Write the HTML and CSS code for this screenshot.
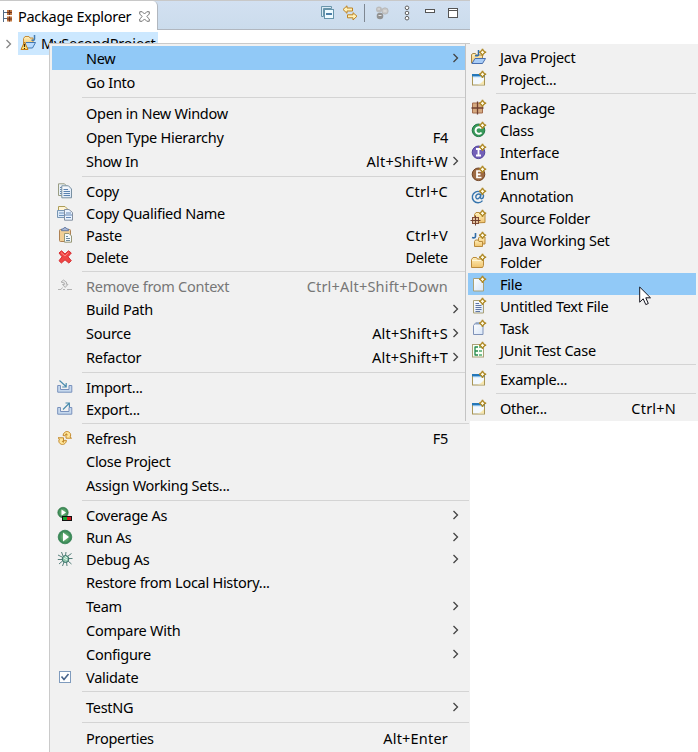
FILE: index.html
```
<!DOCTYPE html>
<html lang="en">
<head>
<meta charset="utf-8">
<title>Package Explorer</title>
<link rel="stylesheet" href="styles.css">
</head>
<body>
<svg class="defs" width="0" height="0" aria-hidden="true">
  <defs>
    <linearGradient id="gold" x1="0" y1="0" x2="0" y2="1"><stop offset="0" stop-color="#fff0bd"/><stop offset="1" stop-color="#f0c36c"/></linearGradient>
    <linearGradient id="sheet" x1="0" y1="0" x2="1" y2="1"><stop offset="0" stop-color="#fff"/><stop offset="1" stop-color="#d8e5f6"/></linearGradient>
    <radialGradient id="green"><stop offset="0" stop-color="#8bcb86"/><stop offset="1" stop-color="#2d8050"/></radialGradient>
  </defs>
  <symbol id="spark" viewBox="0 0 16 16"><path d="M11.5 .8 14 3.3 11.5 5.8 9 3.3Z" fill="#fff4c4" stroke="#b08a28" stroke-width="1.5"/><path d="M11.5 -.2V1M11.5 5.6V7M8 3.3H9M14 3.3H15.2" stroke="#b08a28" stroke-width="1.6"/><path d="M11.5 1.8V4.8M10 3.3H13" stroke="#fffbe6"/></symbol>
  <symbol id="folder" viewBox="0 0 16 16"><path d="M.5 13.5V5.5L2 3.5H5.5L6.5 5H12.5V11.5L11.5 13.5Z" fill="url(#gold)" stroke="#b98a3b"/><path d="M1 6.5H12" stroke="#fff6d8"/></symbol>
  <symbol id="window" viewBox="0 0 16 16"><rect x="1.5" y="3.5" width="12" height="10.5" fill="#f3f9ff" stroke="#a89555"/><path d="M13 9C11 11 10 13 6 13.5H13Z" fill="#f8e7ad"/><path d="M1 4.2H14" stroke="#2577b9" stroke-width="2.4"/><path d="M2 5.7H13" stroke="#81bce9"/></symbol>
  <symbol id="doc" viewBox="0 0 16 16"><path d="M2.5 2.5H9.5L12.5 5.5V15H2.5Z" fill="url(#sheet)" stroke="#aaa177"/></symbol>
  <symbol id="refresh" viewBox="0 0 16 16"><path d="M6.5 4C7.5 1.5 10.5 .8 12.3 2.3 14.2 3.8 13.8 6 13 7L14.5 8.2H9V3.8L10.3 5C10.5 4 8.5 3.5 7.8 5.8L6 5.5Z" fill="#ffe59a" stroke="#c48a2c"/><path d="M9 12C8 14.5 5 15.2 3.2 13.7 1.3 12.2 1.7 10 2.5 9L1 7.8H6.5V12.2L5.2 11C5 12 7 12.5 7.7 10.2L9.5 10.5Z" fill="#ffe59a" stroke="#c48a2c"/></symbol>
  <symbol id="arrow" viewBox="0 0 8 10"><path d="M1.5 1 5.5 5 1.5 9" fill="none" stroke="#444" stroke-width="1.3"/></symbol>
</svg>

<section class="view">
  <header class="bar">
    <div class="tab">
      <svg class="tab-icon" width="12" height="14" viewBox="0 0 12 14"><path d="M1.5 1V13M1.5 3.5H5M1.5 9.5H5" fill="none" stroke="#536c86"/><path d="M5 1H10V6H5ZM5 7.5H10V12.5H5Z" fill="#bd7641"/><path d="M7.5 1V6M5 3.5H10M7.5 7.5V12.5M5 10H10" stroke="#6d3421"/></svg>
      <span class="tab-title">Package Explorer</span>
      <svg width="11" height="11" viewBox="0 0 12 12"><path d="M.8 .8H3.5L6 3.3 8.5 .8H11.2V3.3L8.5 6 11.2 8.7V11.2H8.5L6 8.7 3.5 11.2H.8V8.7L3.5 6 .8 3.3Z" fill="#fff" stroke="#6b6b6b"/></svg>
    </div>
    <div class="tools">
      <svg class="tool" width="14" height="14" viewBox="0 0 14 14"><path d="M.5 10.5V.5H10.5V2.5H2.5V10.5Z" fill="#d9eaf5" stroke="#6995aa"/><rect x="3.5" y="3.5" width="9" height="9" fill="#eefaff" stroke="#6593aa"/><path d="M5 8H11" stroke="#17578b" stroke-width="1.5"/></svg>
      <svg class="tool link" width="16" height="16" viewBox="0 0 16 16"><path d="M1 4.5 5 .8V3H10.5V6H5V8.3Z" fill="#fff1b8" stroke="#bd8222"/><path d="M15 11.2 11 15V12.8H5.5V9.8H11V7.7Z" fill="#fff1b8" stroke="#bd8222"/></svg>
      <i class="divider"></i>
      <svg class="tool focus" width="14" height="14" viewBox="0 0 14 14"><circle cx="4" cy="3.5" r="3" fill="#bcbcbc"/><circle cx="10" cy="5" r="3.2" fill="#c9c9c9" stroke="#aaa" stroke-width=".6"/><circle cx="5" cy="10" r="3.3" fill="#929292"/><path d="M2.5 3H5M8.5 5H11.5M3.5 9.5H6.5" stroke="#e5e5e5"/></svg>
      <svg class="tool dots" width="6" height="16" viewBox="0 0 6 16"><g fill="#fff" stroke="#606060"><circle cx="3" cy="2.8" r="1.8"/><circle cx="3" cy="8" r="1.8"/><circle cx="3" cy="13.2" r="1.8"/></g></svg>
      <svg class="tool min" width="10" height="4" viewBox="0 0 10 4"><rect x=".5" y=".5" width="9" height="3" fill="#fff" stroke="#555"/></svg>
      <svg class="tool" width="10" height="10" viewBox="0 0 10 10"><rect x=".5" y=".5" width="9" height="9" fill="#fff" stroke="#555"/><path d="M0 2.5H10" stroke="#555"/></svg>
    </div>
  </header>
  <div class="tree">
    <svg class="twisty" width="8" height="10"><use href="#arrow"/></svg>
    <div class="node">
      <svg width="18" height="16" viewBox="0 0 18 16"><path d="M3.5 10V3.5L5 1.5H9L10 3H13V8" fill="url(#gold)" stroke="#c28c3a"/><path d="M6 7.5H15.5L12.5 13H3Z" fill="#b9dcff" stroke="#4378b0"/><path d="M14.5 0V4Q14.5 6 11.5 5" fill="none" stroke="#447bae" stroke-width="1.5"/><path d="M4.5 7 8 14.5H1Z" fill="#ffe175" stroke="#c57d15"/><path d="M4.5 9V12M4.5 13V14" stroke="#3f2a0c" stroke-width="1.2"/></svg>
      <span class="node-name">MySecondProject</span>
    </div>
  </div>
</section>

<nav class="menu main">
  <div class="row tall on"><span class="label">New</span><svg class="arrow"><use href="#arrow"/></svg></div>
  <div class="row tall"><span class="label">Go Into</span></div>
  <hr>
  <div class="row tall"><span class="label">Open in New Window</span></div>
  <div class="row tall"><span class="label">Open Type Hierarchy</span><span class="key">F4</span></div>
  <div class="row tall"><span class="label">Show In</span><span class="key combo">Alt+Shift+W</span><svg class="arrow"><use href="#arrow"/></svg></div>
  <hr>
  <div class="row"><svg class="icon" viewBox="0 0 16 16"><path d="M1.5 .8H7.5L9.5 3V12.5H1.5Z" fill="#e8f0f7" stroke="#9a9d83"/><path d="M3 4.5H5M3 6.5H5M3 8.5H5M3 10.5H5" stroke="#6689af"/><path d="M4.8 2.8H11.5L14.5 6V14.8H4.8Z" fill="url(#sheet)" stroke="#7890a2"/><path d="M6.5 6.5H11M6.5 8.5H13M6.5 10.5H13M6.5 12.5H13" stroke="#5a82af"/></svg><span class="label">Copy</span><span class="key combo">Ctrl+C</span></div>
  <div class="row"><svg class="icon" viewBox="0 0 16 16"><path d="M1.5 1.5H8L10.5 4V12.5H1.5Z" fill="#fff4d6" stroke="#ad9d58"/><path d="M.5 5.5H8V12.5H.5Z" fill="#dce9f7" stroke="#7896b4"/><path d="M2 8H7M2 10.5H7" stroke="#6e93be"/><path d="M7.5 4.5H12L15.5 7.5V15.2H7.5Z" fill="#eaf3ff" stroke="#8590a0"/><path d="M7.5 10H15M9 12.5H14M9 8H14" stroke="#6689b5"/></svg><span class="label">Copy Qualified Name</span></div>
  <div class="row"><svg class="icon" viewBox="0 0 16 16"><rect x="2.5" y="2.5" width="11" height="12" rx="1" fill="#f1cf96" stroke="#ae8153"/><path d="M4.5 3.7V2H6L7 .7H9L10 2H11.5V3.7Z" fill="#a9b8d6" stroke="#677ba2"/><path d="M7.5 6.5H12L14.5 9V15.2H7.5Z" fill="#f4f9fb" stroke="#979878"/><path d="M9 9.5H11M9 11.5H13M9 13.5H13" stroke="#6f8ca0"/></svg><span class="label">Paste</span><span class="key combo">Ctrl+V</span></div>
  <div class="row"><svg class="icon" viewBox="0 0 16 16"><path d="M2 4 4.5 1.8 8 5 11.5 1.8 14.3 4 11 7.8 14.3 11.7 11.8 14 8 10.8 4.4 14 2 11.7 5.1 7.8Z" fill="#ef4544" stroke="#d72c30" stroke-linejoin="round"/><path d="M4 3.5 8 7 11.5 3.6" fill="none" stroke="#ff8680"/></svg><span class="label">Delete</span><span class="key">Delete</span></div>
  <hr>
  <div class="row off"><svg class="icon" viewBox="0 0 16 16"><path d="M4 4 6.5 2 9.5 4.2V6.3H11L8.2 9.5 5.5 6.5H7.3V5Z" fill="#e6e6e6" stroke="#aaa" stroke-width=".9"/><path d="M1 11.5H4L5.5 9.5M6 11.5H8M10 11.5H15" fill="none" stroke="#b3b3b3"/></svg><span class="label">Remove from Context</span><span class="key combo">Ctrl+Alt+Shift+Down</span></div>
  <div class="row tall"><span class="label">Build Path</span><svg class="arrow"><use href="#arrow"/></svg></div>
  <div class="row tall"><span class="label">Source</span><span class="key combo">Alt+Shift+S</span><svg class="arrow"><use href="#arrow"/></svg></div>
  <div class="row tall"><span class="label">Refactor</span><span class="key combo">Alt+Shift+T</span><svg class="arrow"><use href="#arrow"/></svg></div>
  <hr>
  <div class="row"><svg class="icon" viewBox="0 0 16 16"><path d="M.7 6.5H3.5V10.5H12V6.5H14.8V13.2H.7Z" fill="#c7d9ee" stroke="#7891bc"/><path d="M2.5 1.5 9 7.5M9.2 4V8H5.2" fill="none" stroke="#4d8dae" stroke-width="1.2"/></svg><span class="label">Import...</span></div>
  <div class="row"><svg class="icon" viewBox="0 0 16 16"><path d="M.7 6.5H3.5V10.5H12V6.5H14.8V13.2H.7Z" fill="#c7d9ee" stroke="#7891bc"/><path d="M6 8.5 12 2.5M8.5 2H12.4V6" fill="none" stroke="#4d8dae" stroke-width="1.2"/></svg><span class="label">Export...</span></div>
  <hr>
  <div class="row"><svg class="icon" viewBox="0 0 16 16"><use href="#refresh"/></svg><span class="label">Refresh</span><span class="key">F5</span></div>
  <div class="row tall"><span class="label">Close Project</span></div>
  <div class="row tall"><span class="label">Assign Working Sets...</span></div>
  <hr>
  <div class="row"><svg class="icon" viewBox="0 0 16 16"><circle cx="6" cy="5.5" r="5.2" fill="url(#green)" stroke="#397d49" stroke-width=".7"/><path d="M4.5 2.5 9 5.5 4.5 8.5Z" fill="#fff"/><rect x="5.5" y="9.5" width="9" height="4" fill="#d31b1e" stroke="#111"/><path d="M6 10H10V13H6Z" fill="#17a52c"/></svg><span class="label">Coverage As</span><svg class="arrow"><use href="#arrow"/></svg></div>
  <div class="row"><svg class="icon" viewBox="0 0 16 16"><circle cx="8" cy="8" r="6.8" fill="url(#green)" stroke="#348052" stroke-width=".8"/><path d="M6 3.5 12 8 6 12.5Z" fill="#fff"/></svg><span class="label">Run As</span><svg class="arrow"><use href="#arrow"/></svg></div>
  <div class="row"><svg class="icon" viewBox="0 0 16 16"><path d="M4.5 1 6 5M9 1 8.5 4.5M1 4 5 6M.8 8.5H5M2 13 5.5 10M5.5 15 7 11M10 15 9.5 11M11 5 14.5 2.5M11.5 7.5H15.5M11 10 14.5 13" stroke="#56807b" stroke-width="1"/><ellipse cx="8.5" cy="8" rx="3.3" ry="3.5" fill="#91c5ae" stroke="#346e64"/><path d="M7 7 10 9M8 5.5 10 7" stroke="#e8fff0"/></svg><span class="label">Debug As</span><svg class="arrow"><use href="#arrow"/></svg></div>
  <div class="row tall"><span class="label">Restore from Local History...</span></div>
  <div class="row tall"><span class="label">Team</span><svg class="arrow"><use href="#arrow"/></svg></div>
  <div class="row tall"><span class="label">Compare With</span><svg class="arrow"><use href="#arrow"/></svg></div>
  <div class="row tall"><span class="label">Configure</span><svg class="arrow"><use href="#arrow"/></svg></div>
  <div class="row"><svg class="icon" viewBox="0 0 16 16"><rect x="2.5" y="2.5" width="11" height="11" fill="#fff" stroke="#7f9bbd"/><path d="M4.5 7.5 7 10.5 11.5 5" fill="none" stroke="#48648a" stroke-width="1.6"/></svg><span class="label">Validate</span></div>
  <hr>
  <div class="row tall"><span class="label">TestNG</span><svg class="arrow"><use href="#arrow"/></svg></div>
  <hr>
  <div class="row tall"><span class="label">Properties</span><span class="key combo">Alt+Enter</span></div>
</nav>

<nav class="menu sub">
  <div class="row"><svg class="icon" viewBox="0 0 16 16"><path d="M.5 14V5.5L2 4.5H4.5L5.5 6H11.5V14Z" fill="url(#gold)" stroke="#a78643"/><path d="M4 9.5H14.5L11.5 14.5H1Z" fill="#a9cdf7" stroke="#496fae"/><path d="M7.5 1V5.5Q7 7.5 4 6.5" fill="none" stroke="#316ca7" stroke-width="1.5"/><use href="#spark"/></svg><span class="label">Java Project</span></div>
  <div class="row"><svg class="icon" viewBox="0 0 16 16"><use href="#window"/><use href="#spark"/></svg><span class="label">Project...</span></div>
  <hr>
  <div class="row"><svg class="icon" viewBox="0 0 16 16"><path d="M1.5 3H11.5V13H1.5Z" fill="#d6aa80" stroke="#a36c4e"/><path d="M6.5 1.5V14.5M.5 8H12.5" stroke="#70402f" stroke-width="1.3"/><use href="#spark"/></svg><span class="label">Package</span></div>
  <div class="row"><svg class="icon" viewBox="0 0 16 16"><circle cx="7.5" cy="8.3" r="6.3" fill="#399a5a" stroke="#207644"/><path d="M10.5 6.5A3.3 3.3 0 1 0 10.5 10.5" fill="none" stroke="#fff" stroke-width="2"/><use href="#spark"/></svg><span class="label">Class</span></div>
  <div class="row"><svg class="icon" viewBox="0 0 16 16"><circle cx="7.5" cy="8.3" r="6.3" fill="#7460b8" stroke="#51439b"/><path d="M5 5H10M7.5 5V11.5M5 11.5H10" stroke="#fff" stroke-width="1.8"/><use href="#spark"/></svg><span class="label">Interface</span></div>
  <div class="row"><svg class="icon" viewBox="0 0 16 16"><circle cx="7.5" cy="8.3" r="6.3" fill="#9d6a43" stroke="#704323"/><path d="M10.5 5H6V11.5H10.5M6 8.3H9.5" fill="none" stroke="#fff" stroke-width="1.7"/><use href="#spark"/></svg><span class="label">Enum</span></div>
  <div class="row"><svg class="icon" viewBox="0 0 16 16"><path d="M11.5 12.6A5.7 5.7 0 1 1 12.5 7.5C12.5 11.5 9 11.5 9.5 9L10.2 5.5M9.5 7C7.5 4.5 4.5 7 4.8 9.2 5.5 12 8.5 11 9.5 8" fill="none" stroke="#3775ad" stroke-width="1.4"/><use href="#spark"/></svg><span class="label">Annotation</span></div>
  <div class="row"><svg class="icon" viewBox="0 0 16 16"><path d="M3.5 13V4.5L5 2.5H8L9.5 4H14V12.5Z" fill="url(#gold)" stroke="#b98a3b"/><rect x="1.5" y="7.5" width="6" height="6" fill="#e3c3a0" stroke="#824c36"/><path d="M4.5 5.5V15.5M-.5 10.5H9.5" stroke="#70402f"/><use href="#spark"/></svg><span class="label">Source Folder</span></div>
  <div class="row"><svg class="icon" viewBox="0 0 16 16"><path d="M4.5 1V4.5Q4 6.5 1 5.5" fill="none" stroke="#316ca7" stroke-width="1.6"/><path d="M7.5 10V6L8.5 5H14V12H8Z" fill="url(#gold)" stroke="#b98a3b"/><path d="M3.5 14.5V9.5L4.5 8H7L8 9.5H11.5V14.5Z" fill="url(#gold)" stroke="#b98a3b"/><use href="#spark"/></svg><span class="label">Java Working Set</span></div>
  <div class="row"><svg class="icon" viewBox="0 0 16 16"><use href="#folder"/><use href="#spark"/></svg><span class="label">Folder</span></div>
  <div class="row on"><svg class="icon" viewBox="0 0 16 16"><use href="#doc"/><use href="#spark"/></svg><span class="label">File</span></div>
  <div class="row"><svg class="icon" viewBox="0 0 16 16"><use href="#doc"/><path d="M4.5 5.5H8M4.5 7.5H10.5M4.5 9.5H10.5M4.5 11.5H10.5M4.5 13.5H9" stroke="#5e75a5"/><use href="#spark"/></svg><span class="label">Untitled Text File</span></div>
  <div class="row"><svg class="icon" viewBox="0 0 16 16"><path d="M2.5 5.5 4.5 3H10L12 5.5V14.5H2.5Z" fill="url(#sheet)" stroke="#7f92b8"/><path d="M4 4.5 5 2.5H9.5L11 4.5Z" fill="#8da4c4"/><use href="#spark"/></svg><span class="label">Task</span></div>
  <div class="row"><svg class="icon" viewBox="0 0 16 16"><rect x="1.5" y="2.5" width="11" height="12.5" fill="#f9fff6" stroke="#aaa177"/><path d="M4 4.5V13.5M4 5H7M4 9H7M4 13H7" stroke="#23894b" stroke-width="1.3"/><path d="M8 5H11M8 9H11M8 13H11" stroke="#4daa6f" stroke-width="1.7"/><use href="#spark"/></svg><span class="label">JUnit Test Case</span></div>
  <hr>
  <div class="row"><svg class="icon" viewBox="0 0 16 16"><use href="#window"/><use href="#spark"/></svg><span class="label">Example...</span></div>
  <hr>
  <div class="row"><svg class="icon" viewBox="0 0 16 16"><use href="#window"/><use href="#spark"/></svg><span class="label">Other...</span><span class="key combo">Ctrl+N</span></div>
</nav>
<svg class="cursor" width="13" height="20" viewBox="0 0 13 20"><path d="M.7 1V16.2L4.2 12.8 6.8 18.6 9.3 17.5 6.8 11.8H11.5Z" fill="#fff" stroke="#15151f"/></svg>
</body>
</html>
```
FILE: styles.css
```
body {
  margin: 0;
  width: 698px;
  height: 752px;
  position: relative;
  overflow: hidden;
  background: #fff;
  color: #000;
  font: 14.5px/22px "Noto Sans", "Open Sans", sans-serif;
  letter-spacing: -0.27px;
}
.defs { position: absolute; }
svg { display: block; flex: none; overflow: visible; }
symbol { overflow: visible; }

.view { width: 471px; }
.bar {
  display: flex;
  box-sizing: border-box;
  width: 470px;
  height: 30px;
  border-top: 1px solid #c8c8c8;
  border-bottom: 1px solid #b1b7bf;
  background: linear-gradient(#d2e0f1, #cbdcec);
}
.tab {
  display: flex;
  align-items: center;
  box-sizing: border-box;
  width: 158px;
  height: 29px;
  padding: 1px 0 0 2px;
  border-right: 1px solid #b1b7bf;
  border-top-right-radius: 5px;
  background: #fff;
}
.tab-title { width: 115px; margin: 0 6px 0 4px; white-space: nowrap; }
.tools { display: flex; align-items: center; flex: 1; padding-left: 163px; height: 24px; }
.link { margin-left: 7px; }
.divider { width: 1px; height: 18px; margin: 0 10px 0 6px; background: #7e8792; }
.dots { margin: 0 14px 0 15px; }
.min { margin: 0 13px 5px 1px; }

.tree { display: flex; height: 23px; padding: 2px 0 0 5px; }
.twisty { margin: 7px 5px 0 0; opacity: .65; }
.node { display: flex; width: 138px; padding-left: 2px; background: #cce8ff; }
.node svg { margin-top: 3px; }
.node-name { margin-left: 3px; line-height: 23px; letter-spacing: -0.2px; }

.menu { position: absolute; box-sizing: border-box; background: #f1f1f1; }
.main { left: 49px; top: 43px; width: 421px; height: 709px; padding: 2px 1px 0 2px; border: solid #cacaca; border-width: 1px 0 0 1px; --gutter: 30px; }
.sub { left: 465px; top: 44px; width: 233px; height: 377px; padding: 2px 2px 0; border-left: 1px solid #c4c4c4; --gutter: 28px; }
.row { display: flex; align-items: center; height: 22px; box-sizing: border-box; padding: 0 9px 0 4px; white-space: nowrap; }
.tall { height: 24px; }
.icon { width: 16px; height: 16px; margin: 0 13px 0 1px; }
.sub .icon { margin: 0 13px 0 -1px; }
.label { margin-right: auto; }
.row > .label:first-child { margin-left: 30px; }
.key { margin-right: 12px; }
.combo { letter-spacing: 0.2px; }
.sub .key { margin-right: 11px; }
.arrow { width: 8px; height: 10px; }
.key + .arrow { margin-left: -8px; }
.on { background: #91c9f7; }
.off { color: #777; }
hr { height: 1px; margin: 3px 0 3px var(--gutter); border: 0; background: #d4d4d4; }
.cursor { position: absolute; left: 639px; top: 286px; }
```
